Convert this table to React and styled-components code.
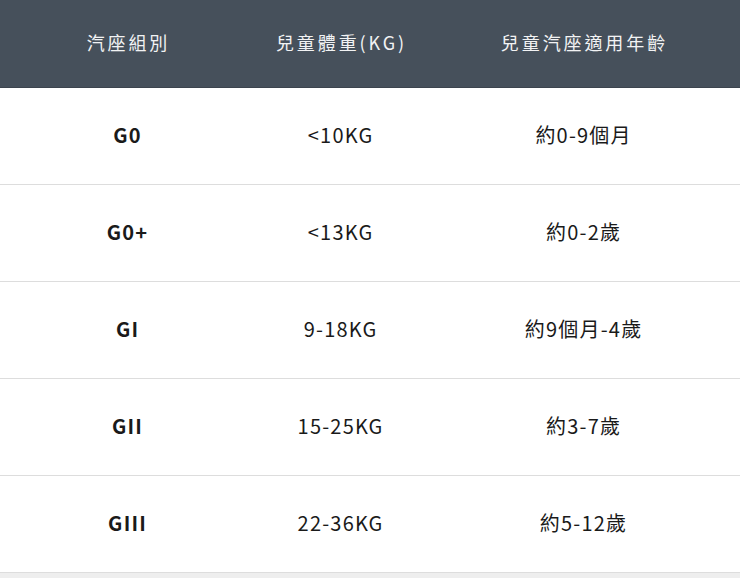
import styled, { createGlobalStyle } from 'styled-components'

const GlobalStyle = createGlobalStyle`
  body {
    margin: 0;
    background: #ffffff;
    font-family: "Noto Sans CJK TC", "Noto Sans", sans-serif;
  }
`

const rows = [
  { group: 'G0', weight: '<10KG', age: '約0-9個月' },
  { group: 'G0+', weight: '<13KG', age: '約0-2歲' },
  { group: 'GI', weight: '9-18KG', age: '約9個月-4歲' },
  { group: 'GII', weight: '15-25KG', age: '約3-7歲' },
  { group: 'GIII', weight: '22-36KG', age: '約5-12歲' },
]

const Table = styled.div`
  width: 740px;
`

const Row = styled.div`
  box-sizing: border-box;
  display: grid;
  grid-template-columns: 254px 172px 1fr;
  height: ${(p) => (p.$head ? '88px' : '97px')};
  background: ${(p) => (p.$head ? '#46505b' : '#ffffff')};
  border-bottom: 1px solid ${(p) => (p.$head ? '#3c444e' : '#dddddd')};
`

const Cell = styled.div`
  display: flex;
  align-items: center;
  justify-content: center;
  padding-left: ${(p) => (p.$head ? '2.9px' : '1.2px')};
  padding-bottom: 3px;
  font-size: ${(p) => (p.$head ? '18px' : '20px')};
  letter-spacing: ${(p) => (p.$head ? '2.9px' : '1.2px')};
  font-weight: ${(p) => (p.$bold ? 700 : 400)};
  color: ${(p) => (p.$head ? '#f2f3f4' : '#1a1a1a')};
`

const Bottom = styled.div`
  height: 8px;
  background: #eeeeee;
`

export default function App() {
  return (
    <>
      <GlobalStyle />
      <Table>
        <Row $head>
          <Cell $head>汽座組別</Cell>
          <Cell $head>兒童體重(KG)</Cell>
          <Cell $head>兒童汽座適用年齡</Cell>
        </Row>
        {rows.map((r) => (
          <Row key={r.group}>
            <Cell $bold>{r.group}</Cell>
            <Cell>{r.weight}</Cell>
            <Cell>{r.age}</Cell>
          </Row>
        ))}
        <Bottom />
      </Table>
    </>
  )
}
